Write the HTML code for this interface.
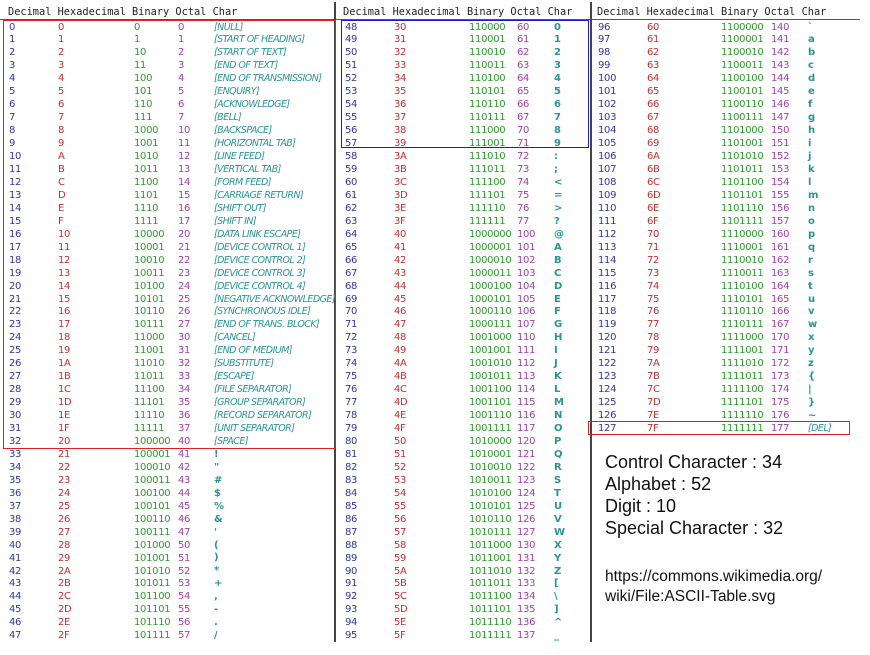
<!DOCTYPE html>
<html><head><meta charset="utf-8"><style>
html,body{margin:0;padding:0;background:#fff;}
body{width:870px;height:655px;position:relative;overflow:hidden;font-family:"DejaVu Sans","Liberation Sans",sans-serif;font-size:10px;}
.c{position:absolute;top:21.5px;line-height:12.95px;white-space:pre;letter-spacing:-0.3px}
.d{color:#35359a}.h{color:#c03030}.b{color:#2e9a2e}.o{color:#a040a8}
.ch{color:#2a9494;font-weight:bold;letter-spacing:0}
.ct{color:#2a9494;font-style:italic;font-size:9.5px;letter-spacing:-0.55px}
.hd{position:absolute;top:6px;font-family:"DejaVu Sans Mono",monospace;font-size:10.3px;color:#222;white-space:pre}
.vl{position:absolute;top:2px;width:2px;height:640px;background:#444}
.hl{position:absolute;top:19px;height:1px;background:#555}
.box{position:absolute;box-sizing:border-box}
.t{position:absolute;left:605px;font-family:"Liberation Sans",Arial,sans-serif;color:#111}
</style></head><body>
<div class="hd" style="left:8px">Decimal Hexadecimal Binary Octal Char</div>
<div class="hd" style="left:343px">Decimal Hexadecimal Binary Octal Char</div>
<div class="hd" style="left:597px">Decimal Hexadecimal Binary Octal Char</div>
<div class="hl" style="left:0;width:860px"></div>
<div class="vl" style="left:334px"></div>
<div class="vl" style="left:590px"></div>
<div class="box" style="left:3px;top:20px;width:333px;height:429px;border:1.5px solid #e02020"></div>
<div class="box" style="left:341px;top:20px;width:248px;height:128px;border:1.5px solid #1a1ad8"></div>
<div class="box" style="left:588px;top:421px;width:262px;height:14px;border:1.5px solid #e02020"></div>

<div class="c d" style="left:9px">0
1
2
3
4
5
6
7
8
9
10
11
12
13
14
15
16
17
18
19
20
21
22
23
24
25
26
27
28
29
30
31
32
33
34
35
36
37
38
39
40
41
42
43
44
45
46
47</div>
<div class="c h" style="left:58px">0
1
2
3
4
5
6
7
8
9
A
B
C
D
E
F
10
11
12
13
14
15
16
17
18
19
1A
1B
1C
1D
1E
1F
20
21
22
23
24
25
26
27
28
29
2A
2B
2C
2D
2E
2F</div>
<div class="c b" style="left:134px">0
1
10
11
100
101
110
111
1000
1001
1010
1011
1100
1101
1110
1111
10000
10001
10010
10011
10100
10101
10110
10111
11000
11001
11010
11011
11100
11101
11110
11111
100000
100001
100010
100011
100100
100101
100110
100111
101000
101001
101010
101011
101100
101101
101110
101111</div>
<div class="c o" style="left:178px">0
1
2
3
4
5
6
7
10
11
12
13
14
15
16
17
20
21
22
23
24
25
26
27
30
31
32
33
34
35
36
37
40
41
42
43
44
45
46
47
50
51
52
53
54
55
56
57</div>
<div class="c ct" style="left:214px">[NULL]
[START OF HEADING]
[START OF TEXT]
[END OF TEXT]
[END OF TRANSMISSION]
[ENQUIRY]
[ACKNOWLEDGE]
[BELL]
[BACKSPACE]
[HORIZONTAL TAB]
[LINE FEED]
[VERTICAL TAB]
[FORM FEED]
[CARRIAGE RETURN]
[SHIFT OUT]
[SHIFT IN]
[DATA LINK ESCAPE]
[DEVICE CONTROL 1]
[DEVICE CONTROL 2]
[DEVICE CONTROL 3]
[DEVICE CONTROL 4]
[NEGATIVE ACKNOWLEDGE]
[SYNCHRONOUS IDLE]
[END OF TRANS. BLOCK]
[CANCEL]
[END OF MEDIUM]
[SUBSTITUTE]
[ESCAPE]
[FILE SEPARATOR]
[GROUP SEPARATOR]
[RECORD SEPARATOR]
[UNIT SEPARATOR]
[SPACE]</div>
<div class="c ch" style="left:214px;top:448.85px">!
"
#
$
%
&amp;
'
(
)
*
+
,
-
.
/</div>

<div class="c d" style="left:345px">48
49
50
51
52
53
54
55
56
57
58
59
60
61
62
63
64
65
66
67
68
69
70
71
72
73
74
75
76
77
78
79
80
81
82
83
84
85
86
87
88
89
90
91
92
93
94
95</div>
<div class="c h" style="left:394px">30
31
32
33
34
35
36
37
38
39
3A
3B
3C
3D
3E
3F
40
41
42
43
44
45
46
47
48
49
4A
4B
4C
4D
4E
4F
50
51
52
53
54
55
56
57
58
59
5A
5B
5C
5D
5E
5F</div>
<div class="c b" style="left:469px">110000
110001
110010
110011
110100
110101
110110
110111
111000
111001
111010
111011
111100
111101
111110
111111
1000000
1000001
1000010
1000011
1000100
1000101
1000110
1000111
1001000
1001001
1001010
1001011
1001100
1001101
1001110
1001111
1010000
1010001
1010010
1010011
1010100
1010101
1010110
1010111
1011000
1011001
1011010
1011011
1011100
1011101
1011110
1011111</div>
<div class="c o" style="left:517px">60
61
62
63
64
65
66
67
70
71
72
73
74
75
76
77
100
101
102
103
104
105
106
107
110
111
112
113
114
115
116
117
120
121
122
123
124
125
126
127
130
131
132
133
134
135
136
137</div>
<div class="c ch" style="left:554px">0
1
2
3
4
5
6
7
8
9
:
;
&lt;
=
&gt;
?
@
A
B
C
D
E
F
G
H
I
J
K
L
M
N
O
P
Q
R
S
T
U
V
W
X
Y
Z
[
\
]
^
_</div>

<div class="c d" style="left:598px">96
97
98
99
100
101
102
103
104
105
106
107
108
109
110
111
112
113
114
115
116
117
118
119
120
121
122
123
124
125
126
127</div>
<div class="c h" style="left:647px">60
61
62
63
64
65
66
67
68
69
6A
6B
6C
6D
6E
6F
70
71
72
73
74
75
76
77
78
79
7A
7B
7C
7D
7E
7F</div>
<div class="c b" style="left:721px">1100000
1100001
1100010
1100011
1100100
1100101
1100110
1100111
1101000
1101001
1101010
1101011
1101100
1101101
1101110
1101111
1110000
1110001
1110010
1110011
1110100
1110101
1110110
1110111
1111000
1111001
1111010
1111011
1111100
1111101
1111110
1111111</div>
<div class="c o" style="left:771px">140
141
142
143
144
145
146
147
150
151
152
153
154
155
156
157
160
161
162
163
164
165
166
167
170
171
172
173
174
175
176
177</div>
<div class="c ch" style="left:808px">`
a
b
c
d
e
f
g
h
i
j
k
l
m
n
o
p
q
r
s
t
u
v
w
x
y
z
{
|
}
~</div>
<div class="c ct" style="left:808px;top:423px">[DEL]</div>

<div class="t" style="top:452px;font-size:18px">Control Character : 34</div>
<div class="t" style="top:474px;font-size:18px">Alphabet : 52</div>
<div class="t" style="top:496px;font-size:18px">Digit : 10</div>
<div class="t" style="top:518px;font-size:18px">Special Character : 32</div>
<div class="t" style="top:568px;font-size:15.5px">https://commons.wikimedia.org/</div>
<div class="t" style="top:588px;font-size:15.5px">wiki/File:ASCII-Table.svg</div>
</body></html>
